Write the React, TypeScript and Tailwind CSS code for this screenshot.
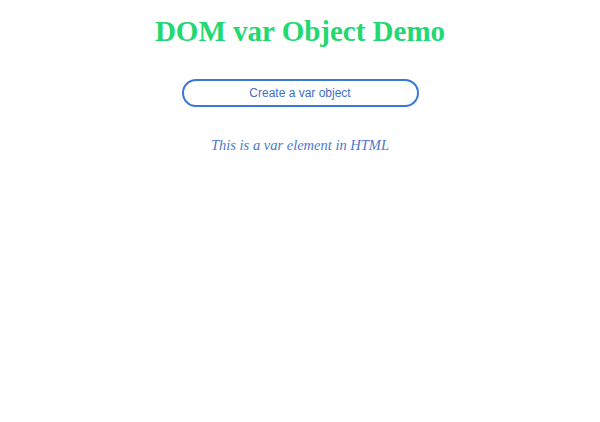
export default function App() {
  return (
    <div className="flex min-h-[422px] flex-col items-center bg-white pt-[14px] font-['Liberation_Serif',serif]">
      <h1 className="text-[29px] leading-[35px] font-bold text-[#22d86f]">DOM var Object Demo</h1>
      <button className="mt-[30px] h-[28px] w-[237px] rounded-full border-2 border-[#3a78d6] bg-white font-['Liberation_Sans',sans-serif] text-[12px] text-[#3f6fc9]">
        Create a var object
      </button>
      <p className="mt-[28px] text-[14.5px] italic text-[#4a78cc]">
        <var>This is a var element in HTML</var>
      </p>
    </div>
  );
}
